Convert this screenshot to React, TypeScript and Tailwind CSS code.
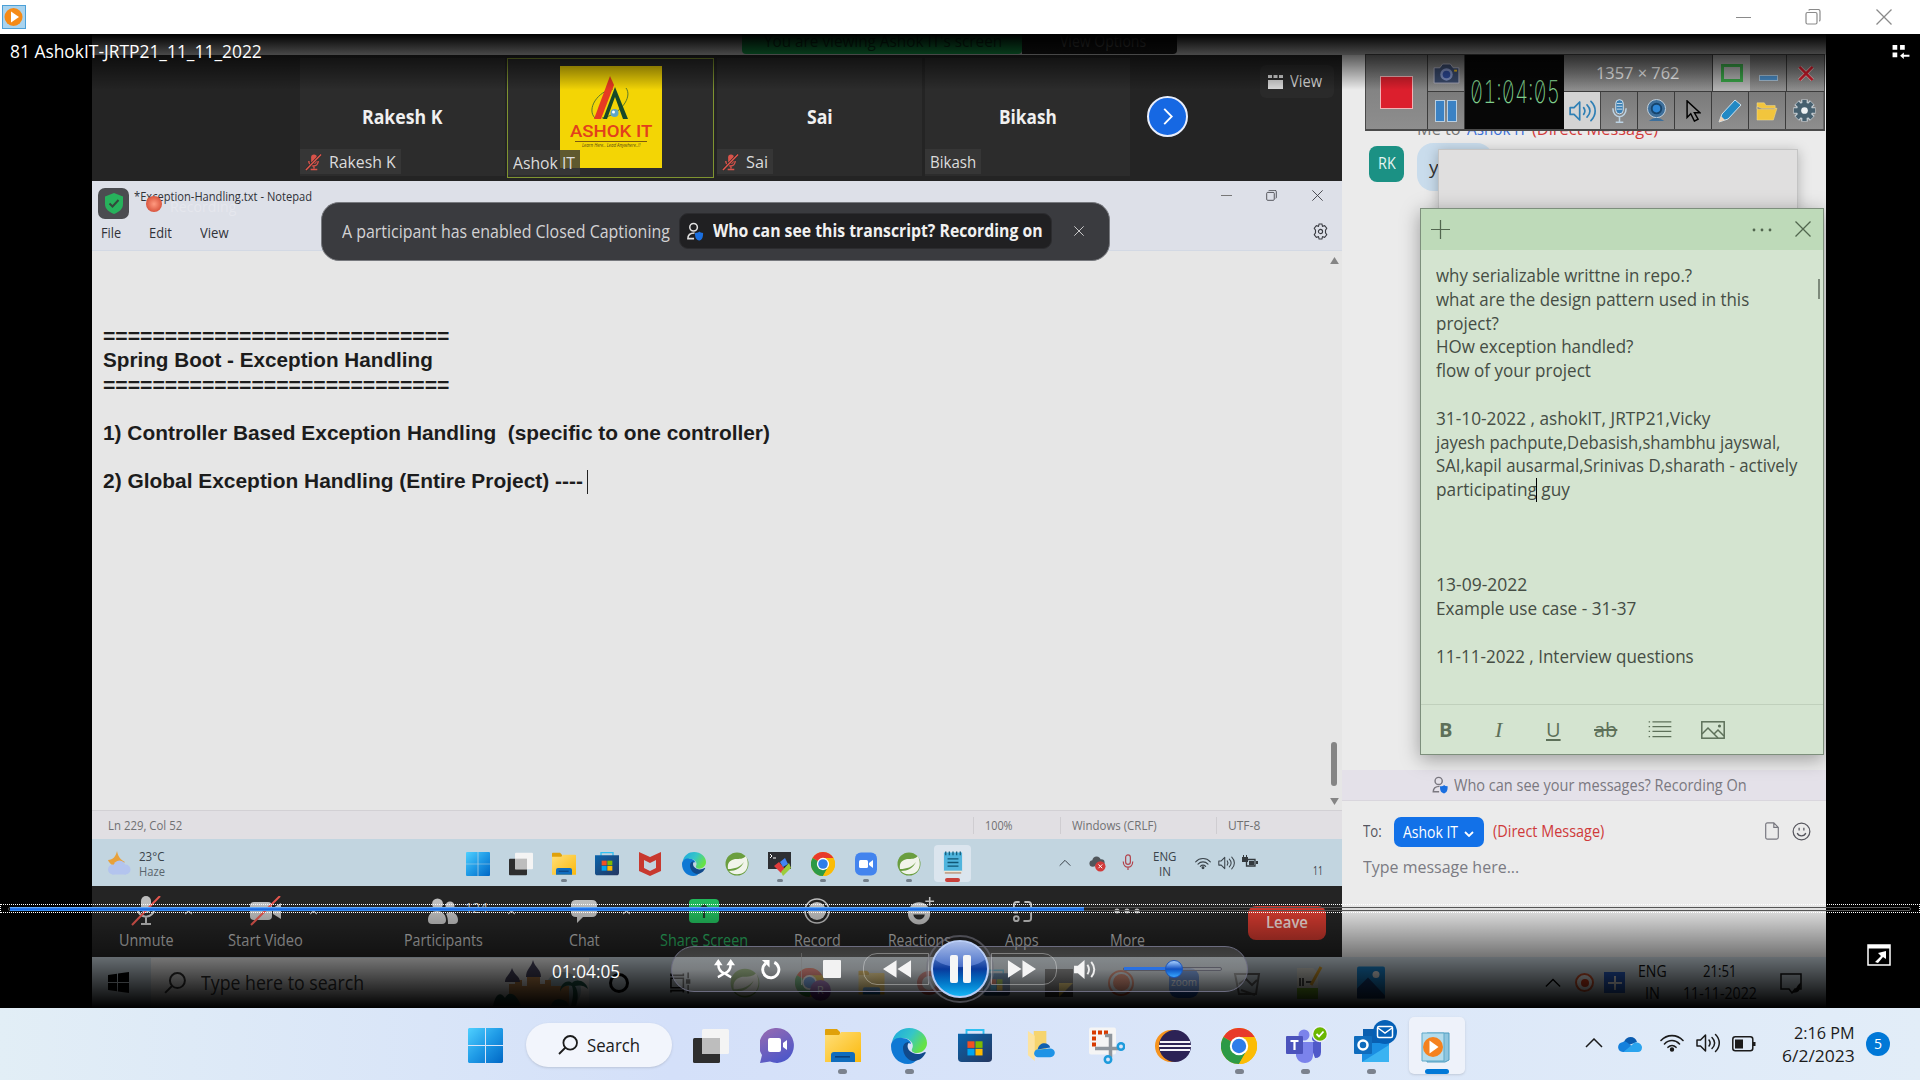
import React, { useLayoutEffect, useRef, ReactNode } from "react";

/* Single-line text stretched to the width of its box. */
function Fit({ c, children }: { c: string; children: ReactNode }) {
  const box = useRef<HTMLSpanElement>(null);
  const txt = useRef<HTMLSpanElement>(null);
  useLayoutEffect(() => {
    if (box.current && txt.current) {
      const s = box.current.clientWidth / txt.current.offsetWidth;
      txt.current.style.transform = "scaleX(" + s + ")";
    }
  }, []);
  return (
    <span ref={box} className={"block shrink-0 overflow-visible whitespace-nowrap " + c}>
      <span ref={txt} className="inline-block origin-left whitespace-pre">{children}</span>
    </span>
  );
}

type P = { c?: string };

const Win11 = ({ c = "" }: P) => (
  <svg viewBox="0 0 35 35" className={"shrink-0 " + c}>
    <defs><linearGradient id="w11" x1="0" y1="0" x2="1" y2="1"><stop offset="0" stopColor="#4fd0ff" /><stop offset="0.5" stopColor="#1f9ae6" /><stop offset="1" stopColor="#0067c5" /></linearGradient></defs>
    <path fill="url(#w11)" d="M1 0h16v17H0V1zM18 0h16l1 1v16H18zM0 18h17v17H1l-1-1zM18 18h17v16l-1 1H18z" />
  </svg>
);
const TaskView = ({ c = "" }: P) => (
  <svg viewBox="0 0 36 36" className={"shrink-0 " + c}>
    <rect x="0" y="10" width="27" height="25" rx="1.5" fill="#2e2e2e" />
    <rect x="9" y="1" width="27" height="25" rx="1.5" fill="#f4f4f4" />
    <path d="M9 10h18v16H9z" fill="#bdbdbd" />
  </svg>
);
const Folder = ({ c = "" }: P) => (
  <svg viewBox="0 0 36 36" className={"shrink-0 " + c}>
    <defs><linearGradient id="fd" x1="0" y1="0" x2="1" y2="1"><stop offset="0" stopColor="#ffdf7a" /><stop offset="1" stopColor="#fbb90c" /></linearGradient></defs>
    <path d="M0 2q0-1 1-1h11l3 3v4H0z" fill="#e0a10a" />
    <path d="M0 7h14l2-3h19l1 1v29H0z" fill="url(#fd)" />
    <path d="M6 34v-7q0-3 3-3h18q3 0 3 3v7z" fill="#0f6cbd" />
    <rect x="10" y="28" width="15" height="1.6" fill="#0a3f7a" />
  </svg>
);
const Store = ({ c = "" }: P) => (
  <svg viewBox="0 0 36 36" className={"shrink-0 " + c}>
    <defs><linearGradient id="st" x1="0" y1="0" x2="1" y2="1"><stop offset="0" stopColor="#0a64ac" /><stop offset="1" stopColor="#24365f" /></linearGradient></defs>
    <path d="M9 7V1h18v6" fill="none" stroke="#2fc0f2" strokeWidth="2" />
    <path d="M0 5h36v26q0 4-4 4H4q-4 0-4-4z" fill="url(#st)" />
    <path d="M10 13h7.5v7H10z" fill="#f25022" /><path d="M18.500 13H26v7h-7.500z" fill="#7fba00" />
    <path d="M10 21h7.500v7H10z" fill="#00a4ef" /><path d="M18.500 21H26v7h-7.500z" fill="#ffb900" />
  </svg>
);
const Edge = ({ c = "" }: P) => (
  <svg viewBox="0 0 36 36" className={"shrink-0 " + c}>
    <defs><linearGradient id="eg" x1="0" y1="0" x2="1" y2="0.500"><stop offset="0" stopColor="#1ca6e0" /><stop offset="0.550" stopColor="#35c6c8" /><stop offset="1" stopColor="#66e246" /></linearGradient></defs>
    <path d="M1 14C3 5 10 0 18 0c10 0 18 7 18 15 0 6-5 10-10 10-4 0-6-2-5-4 3-5-2-11-9-11-5 0-9 2-11 4z" fill="url(#eg)" />
    <path d="M0 18c0-6 6-9 11-8 5 0 9 3 9 6-3-2-6 1-6 5 0 7 6 11 13 10-3 3-6 5-10 5C7 36 0 28 0 18z" fill="#0f78d4" />
    <path d="M12 20c0-4 3-6 6-6-3 4-1 9 4 11 4 2 8 1 12-1 1 0 1 1 0 2-3 5-7 7-12 7-6-1-10-7-10-13z" fill="#114a8b" />
  </svg>
);
const Chrome = ({ c = "" }: P) => (
  <svg viewBox="0 0 36 36" className={"shrink-0 " + c}>
    <circle cx="18" cy="18" r="18" fill="#fbbc05" />
    <path d="M18 18L2.400 9A18 18 0 0 1 33.600 9z" fill="#e8392b" />
    <path d="M18 18L2.400 9A18 18 0 0 0 18 36L26 22z" fill="#2c9a46" />
    <path d="M18 9h15.600A18 18 0 0 1 18 36l8-14z" fill="#fbbc05" />
    <circle cx="18" cy="18" r="9.200" fill="#fff" /><circle cx="18" cy="18" r="7.200" fill="#2f7de9" />
  </svg>
);
const Leaf = ({ c = "" }: P) => (
  <svg viewBox="0 0 24 24" className={"shrink-0 " + c}>
    <circle cx="12" cy="12" r="11.500" fill="#6a9e3f" />
    <path d="M21 4c4 9 1 17-7 18-5 1-8-1-10-3 7 0 12-3 15-9-4 5-9 7-16 7-1-6 2-9 7-10 5 0 8 0 11-3z" fill="#f1f4ea" />
  </svg>
);
const McAfee = ({ c = "" }: P) => (
  <svg viewBox="0 0 22 24" className={"shrink-0 " + c}><path d="M0 0l11 5L22 0v19l-11 5L0 19zM5 8v8l6 3 6-3V8l-6 3z" fill="#c8392f" fillRule="evenodd" /></svg>
);
const Term = ({ c = "" }: P) => (
  <svg viewBox="0 0 24 24" className={"shrink-0 " + c}>
    <rect x="0" y="0" width="23" height="17" fill="#2d2f33" /><path d="M2 2l2 2-2 2M5 6h3" stroke="#fff" fill="none" />
    <path d="M6 14l5-4 6 7-4 4z" fill="#e03c3c" /><path d="M12 10l5-4 3 6-5 3z" fill="#4285f4" /><path d="M13 20l8-9 2 5-8 8z" fill="#9ccc3c" />
  </svg>
);
const ZoomApp = ({ c = "" }: P) => (
  <svg viewBox="0 0 24 24" className={"shrink-0 " + c}><rect x="1" y="0.500" width="22" height="23" rx="6" fill="#4384ee" /><rect x="5" y="8" width="9" height="8" rx="1.500" fill="#fff" /><path d="M15 11l4-3v8l-4-3z" fill="#fff" /></svg>
);
const NotepadApp = ({ c = "" }: P) => (
  <svg viewBox="0 0 22 26" className={"shrink-0 " + c}><rect x="1" y="2" width="20" height="21" fill="#4fb4dd" /><path d="M3 1v4M7 1v4M11 1v4M15 1v4M19 1v4" stroke="#14607f" strokeWidth="1.500" /><path d="M5 9h12M5 13h12M5 17h12" stroke="#0f5574" strokeWidth="1.500" /><path d="M1 22h20v2H1z" fill="#efe6d6" /><path d="M2 24h18v1H2z" fill="#a4653a" /></svg>
);
const Wifi = ({ c = "" }: P) => (
  <svg viewBox="0 0 24 18" className={"shrink-0 " + c} fill="none" stroke="currentColor" strokeWidth="1.600" strokeLinecap="round"><path d="M1 6.500c6-6.500 16-6.500 22 0M4.500 10c4.200-4.600 10.800-4.600 15 0M8 13.300c2.300-2.500 5.700-2.500 8 0" /><circle cx="12" cy="15.500" r="1.400" fill="currentColor" /></svg>
);
const Speaker = ({ c = "" }: P) => (
  <svg viewBox="0 0 24 20" className={"shrink-0 " + c} fill="none" stroke="currentColor" strokeWidth="1.500" strokeLinejoin="round" strokeLinecap="round"><path d="M1 7h3.500L9.500 2v16l-5-5H1zM13 7c1.500 2 1.500 4 0 6M16 4.500c3.500 3.500 3.500 7.500 0 11M19.500 1.500c5 5 5 12 0 17" /></svg>
);
const Battery = ({ c = "" }: P) => (
  <svg viewBox="0 0 24 16" className={"shrink-0 " + c}><rect x="0.800" y="0.800" width="20" height="14" rx="2.500" fill="none" stroke="currentColor" strokeWidth="1.500" /><path d="M3 3.500h8v9H3zM21 6h2.500v4H21z" fill="currentColor" /></svg>
);
const Chevron = ({ c = "" }: P) => (
  <svg viewBox="0 0 18 10" className={"shrink-0 " + c}><path d="M1 9l8-8 8 8" fill="none" stroke="currentColor" strokeWidth="1.500" /></svg>
);
const Cross = ({ c = "" }: P) => (
  <svg viewBox="0 0 16 16" className={"shrink-0 " + c}><path d="M0.500 0.500l15 15M15.500 0.500l-15 15" stroke="currentColor" strokeWidth="1.300" /></svg>
);
const Restore = ({ c = "" }: P) => (
  <svg viewBox="0 0 16 16" className={"shrink-0 " + c} fill="none" stroke="currentColor" strokeWidth="1.200"><rect x="1" y="3.500" width="11" height="11.500" rx="1.500" /><path d="M4 1.500q0-1 1-1h8q2 0 2 2V11q0 1-1 1" /></svg>
);
const Magnifier = ({ c = "" }: P) => (
  <svg viewBox="0 0 20 20" className={"shrink-0 " + c} fill="none" stroke="currentColor" strokeWidth="1.800"><circle cx="12.200" cy="7.800" r="6.800" /><path d="M7.500 12.500L1 19" /></svg>
);
const MicOff = ({ c = "" }: P) => (
  <svg viewBox="0 0 18 18" className={"shrink-0 " + c}><rect x="6.500" y="1" width="6" height="10" rx="3" fill="#d9534a" /><path d="M4 8c0 7 10 7 10 0M9.500 13v3M6 17h7" stroke="#d9534a" strokeWidth="1.500" fill="none" /><path d="M1 17.500L17 1" stroke="#2b2b2b" strokeWidth="3" /><path d="M1 17.500L17 1" stroke="#e0574d" strokeWidth="1.600" /></svg>
);
const PersonShield = ({ c = "" }: P) => (
  <svg viewBox="0 0 18 20" className={"shrink-0 " + c} fill="none" stroke="currentColor" strokeWidth="1.600"><circle cx="7.500" cy="5.500" r="4" /><path d="M8 17.500H1.500c0-5 3-6 7-6" /><path d="M9 11.500q4 0 4.500-1.500 1 1.500 4 1.500c0 5-1 7-4 8-3.500-1-4.500-3-4.500-8z" fill="#1a6fe0" stroke="none" /></svg>
);
const Smile = ({ c = "" }: P) => (
  <svg viewBox="0 0 20 20" className={"shrink-0 " + c} fill="none" stroke="currentColor" strokeWidth="1.300"><circle cx="10" cy="10" r="8.800" /><path d="M5.500 11.500c1.500 4 7.500 4 9 0M7.500 6v3M12.500 6v3" /></svg>
);
const Gear = ({ c = "" }: P) => (
  <svg viewBox="0 0 24 24" className={"shrink-0 " + c}>
    <g stroke="#c5ced4" strokeWidth="7"><path d="M12 0.500v23M0.500 12h23M3.900 3.900l16.200 16.200M20.100 3.900L3.900 20.100" /></g>
    <circle cx="12" cy="12" r="9" fill="#c5ced4" />
    <g stroke="currentColor" strokeWidth="4.500"><path d="M12 1v22M1 12h22M4.200 4.200l15.600 15.600M19.800 4.200L4.200 19.800" /></g>
    <circle cx="12" cy="12" r="8" fill="currentColor" /><circle cx="12" cy="12" r="3.500" fill="#eef2f4" />
  </svg>
);
const Cloud = ({ c = "" }: P) => (
  <svg viewBox="0 0 24 16" className={"shrink-0 " + c}><path d="M6 6C8 0 17-1 19 6l-8 3z" fill="#0a5cb0" /><path d="M5 16c-6 0-7-9 0-10 2-1 4 0 6 2l8 6-2 2z" fill="#1480dc" /><path d="M6 15.500l9-7.500c2-3 9-1 9 3.500 0 3-2 4.500-4 4.500H6z" fill="#2ba4ee" /></svg>
);
const Wmp = ({ c = "" }: P) => (
  <svg viewBox="0 0 24 24" className={"shrink-0 " + c}><rect x="0.500" y="0.500" width="23" height="23" fill="#a9d3ee" stroke="#4ba0d8" /><circle cx="11.500" cy="12" r="9" fill="#f58a16" /><path d="M9 6.500v11l8-5.500z" fill="#fff" /></svg>
);

const Logo = () => (
  <div className="flex h-[102px] w-[102px] flex-col items-center bg-[#f3d505]">
    <svg viewBox="0 0 50 46" className="mt-[9px] h-[46px] w-[50px]">
      <path d="M9 43C0 34 12 16 27 14M40 13C47 22 34 40 16 43" fill="none" stroke="#5b7a2a" strokeWidth="1" />
      <path d="M8 44L24 1l4 9-13 34z" fill="#e63a22" /><path d="M17 44L29 12l13 32h-5L29 22l-8 22z" fill="#17492a" />
      <circle cx="28.500" cy="38" r="4" fill="#5fa5c9" /><circle cx="27.500" cy="37" r="1.500" fill="#fff" />
    </svg>
    <Fit c="mt-[2px] w-[82px] font-['Roboto'] text-[17px] leading-[17px] font-medium text-[#e2401c]">ASHOK IT</Fit>
    <div className="mt-px h-px w-[72px] bg-[#7d5a10]" />
    <Fit c="mt-px w-[58px] text-[5px] leading-[5px] italic text-[#5b4a10]">Learn Here.. Lead Anywhere..!!</Fit>
  </div>
);

const Tile = ({ name, w, label, lw, muted, box, center }: { name: string; w: string; label: string; lw: string; muted?: boolean; box: string; center: ReactNode }) => (
  <div className={"flex h-[118px] shrink-0 flex-col bg-[#2c2c2c] " + box}>
    <div className="flex h-[91px] items-center justify-center">{center ?? <Fit c={"pt-[27px] text-[19px] leading-[19px] font-bold text-[#f0f0f0] " + w}>{name}</Fit>}</div>
    <div className="flex h-[25px] items-center">
      <div className="z-10 flex h-[25px] items-center gap-[7px] bg-[#3a3a3a]/80 px-[5px] text-[#dcdcdc]">
        {muted && <MicOff c="h-[20px] w-[17px]" />}
        <Fit c={"text-[17px] leading-[17px] " + lw}>{label}</Fit>
      </div>
    </div>
  </div>
);

const Tool = ({ box, w, label, icon, green }: { box: string; w: string; label: string; icon: ReactNode; green?: boolean }) => (
  <div className={"flex shrink-0 flex-col items-center " + box}>
    <div className="mt-[10px] flex h-[30px] items-center justify-center">{icon}</div>
    <Fit c={"mt-[4px] text-[17px] leading-[20px] " + w + (green ? " text-[#2bb563]" : " text-[#c2c2c2]")}>{label}</Fit>
  </div>
);

const Caret = ({ c }: { c: string }) => (<svg viewBox="0 0 10 6" className={"absolute top-[24px] h-[5px] w-[9px] " + c}><path d="M1 5l4-4 4 4" fill="none" stroke="#aaa" strokeWidth="1.500" /></svg>);

const Dot = ({ on }: { on?: boolean }) => <div className={"mt-[3px] h-[3px] w-[6px] rounded-full " + (on ? "bg-[#74808a]" : "")} />;

const innerApps: [(p: P) => ReactNode, boolean][] = [
  [Win11, false], [TaskView, false], [Folder, true], [Store, false], [McAfee, false], [Edge, false],
  [Leaf, false], [Term, true], [Chrome, true], [ZoomApp, true], [Leaf, true],
];

function Notepad() {
  return (
    <div className="relative flex h-[705px] flex-col bg-[#e6e6e6]">
      <div className="flex h-[70px] shrink-0 justify-between border-b border-[#d3d9e4] bg-[#dde0e8]">
        <div className="flex flex-col text-[#303238]">
          <div className="flex h-[38px] items-start pl-[6px] pt-[7px]">
            <div className="flex h-[31px] w-[31px] items-center justify-center rounded-[7px] bg-[#4b4c50]">
              <svg viewBox="0 0 18 21" className="h-[21px] w-[18px]"><path d="M9 0l9 3.500V11c0 5-4 8-9 10-5-2-9-5-9-10V3.500z" fill="#27b25c" /><path d="M4.500 10.500l3 3 6-6.500" stroke="#33483b" strokeWidth="2" fill="none" /></svg>
            </div>
            <div className="relative ml-[5px]">
              <Fit c="w-[178px] text-[12.500px] leading-[18px]">*Exception-Handling.txt - Notepad</Fit>
              <div className="absolute left-[12px] top-[8px] h-[16px] w-[16px] rounded-full bg-radial from-[#ff9a80] to-[#c8331f]" />
              <Fit c="absolute left-[36px] top-[8px] w-[66px] text-[15px] leading-[20px] text-white/25">Recording</Fit>
            </div>
          </div>
          <div className="flex pt-[4px] text-[14px] leading-[20px]">
            <Fit c="ml-[9px] w-[20px]">File</Fit><Fit c="ml-[28px] w-[23px]">Edit</Fit><Fit c="ml-[28px] w-[29px]">View</Fit>
          </div>
        </div>
        <div className="flex w-[134px] flex-col text-[#3a3c42]">
          <div className="flex h-[28px] items-center"><div className="ml-[13px] h-px w-[11px] bg-[#777]" /><Restore c="ml-[34px] h-[11px] w-[11px]" /><Cross c="ml-[35px] h-[11px] w-[11px]" /></div>
          <svg viewBox="0 0 18 18" className="ml-[104px] mt-[14px] h-[17px] w-[17px]" fill="none" stroke="currentColor" strokeWidth="1.200"><path d="M7.500 1h3l.6 2.500 2.300-.7L15.600 5.500l-1.300 2v3l1.300 2-2.200 2.700-2.300-.7-.6 2.500h-3l-.6-2.500-2.300.7-2.200-2.700 1.300-2v-3l-1.300-2 2.200-2.700 2.300.7z" /><circle cx="9" cy="9" r="2.200" /></svg>
        </div>
      </div>
      <div className="flex h-[559px] shrink-0 justify-between">
        <div className="relative flex flex-col pl-[11px] pt-[73px] font-['Liberation_Sans'] text-[21px] leading-[24.350px] font-bold text-[#1c1c1c]">
          <Fit c="w-[346px]">============================</Fit>
          <Fit c="w-[330px]">Spring Boot - Exception Handling</Fit>
          <Fit c="w-[346px]">============================</Fit>
          <Fit c="mt-[24px] w-[667px]">1) Controller Based Exception Handling  (specific to one controller)</Fit>
          <div className="mt-[24px] flex items-center"><Fit c="w-[480px]">2) Global Exception Handling (Entire Project) ----</Fit><div className="ml-[4px] h-[24px] w-px bg-[#222]" /></div>
        </div>
        <div className="flex w-[16px] flex-col items-center pt-[6px]">
          <svg viewBox="0 0 10 8" className="h-[7px] w-[9px]"><path d="M0 8l5-8 5 8z" fill="#858585" /></svg>
          <div className="mt-[478px] h-[44px] w-[6px] rounded-full bg-[#858585]" />
          <svg viewBox="0 0 10 8" className="mt-[12px] h-[7px] w-[9px]"><path d="M0 0l5 8 5-8z" fill="#858585" /></svg>
        </div>
      </div>
      <div className="flex h-[29px] shrink-0 items-center border-t border-[#d2d0d4] bg-[#e1dfe3] text-[12px] leading-[18px] text-[#707072]">
        <Fit c="ml-[16px] w-[74px] pt-[2px]">Ln 229, Col 52</Fit>
        <div className="ml-[791px] h-[17px] w-px bg-[#cfcdd1]" /><Fit c="ml-[11px] w-[28px] pt-[2px]">100%</Fit>
        <div className="ml-[47px] h-[17px] w-px bg-[#cfcdd1]" /><Fit c="ml-[11px] w-[85px] pt-[2px]">Windows (CRLF)</Fit>
        <div className="ml-[59px] h-[17px] w-px bg-[#cfcdd1]" /><Fit c="ml-[11px] w-[32px] pt-[2px]">UTF-8</Fit>
      </div>
      <div className="flex h-[47px] shrink-0 bg-[#c2d5e0] text-[#3a434a]">
        <svg viewBox="0 0 24 24" className="ml-[15px] mt-[12px] h-[24px] w-[24px]"><path d="M10 0c1 6 4 9 8 11l-6 5C6 16 2 12 1 9c5 0 8-4 9-9z" fill="#e8a13a" /><g fill="#b3c4ee"><circle cx="6" cy="18.500" r="5" /><circle cx="12.500" cy="15.500" r="6" /><circle cx="18.500" cy="18.500" r="5" /><rect x="5" y="16" width="14" height="7.500" /></g></svg>
        <div className="ml-[8px] flex flex-col pt-[10px] text-[12px] leading-[15px]"><Fit c="w-[25px]">23°C</Fit><Fit c="w-[26px] text-[#5a656d]">Haze</Fit></div>
        <div className="ml-[291px] flex">
          {innerApps.map(([Icon, on], i) => (
            <div key={i} className="flex w-[43.200px] flex-col items-center pt-[13px]"><Icon c="h-[24px] w-[24px]" /><Dot on={on} /></div>
          ))}
          <div className="ml-[3px] mt-[6px] flex h-[37px] w-[37px] flex-col items-center rounded-[4px] bg-[#dbe5ee] pt-[5px]"><NotepadApp c="h-[25px] w-[20px]" /><div className="mt-[3px] h-[4px] w-[15px] rounded-full bg-[#c9403a]" /></div>
        </div>
        <div className="ml-[88px] flex items-start">
          <Chevron c="mt-[20px] h-[8px] w-[12px]" />
          <svg viewBox="0 0 18 18" className="ml-[18px] mt-[16px] h-[17px] w-[17px]"><g fill="#50565b"><circle cx="4" cy="9" r="3.500" /><circle cx="8" cy="6" r="4.500" /><circle cx="13" cy="8" r="3.500" /></g><circle cx="12" cy="12" r="5.500" fill="#d13b3b" /><path d="M10 10l4 4M14 10l-4 4" stroke="#fff" /></svg>
          <svg viewBox="0 0 12 18" className="ml-[16px] mt-[15px] h-[17px] w-[12px]" fill="none" stroke="#b2454e" strokeWidth="1.300"><rect x="3.500" y="1" width="5" height="10" rx="2.500" /><path d="M1 8c0 8 10 8 10 0M6 14v3" /></svg>
          <div className="ml-[19px] flex flex-col items-center pt-[10px] text-[12.500px] leading-[15px]"><Fit c="w-[23px]">ENG</Fit><Fit c="w-[12px]">IN</Fit></div>
          <Wifi c="ml-[19px] mt-[18px] h-[13px] w-[16px]" />
          <Speaker c="ml-[7px] mt-[17px] h-[14px] w-[17px]" />
          <svg viewBox="0 0 16 14" className="ml-[7px] mt-[16px] h-[14px] w-[16px]"><path d="M5 4.500h8v6.500H4.500V7" fill="none" stroke="#33393d" strokeWidth="1.300" /><path d="M7 6h5v4H7zM14 6h2v3h-2z" fill="#33393d" /><path d="M0 2h6v5H0zM1 0h1v2H1zM4 0h1v2H4z" fill="#33393d" /></svg>
          <Fit c="ml-[55px] mt-[24px] w-[10px] text-[12px] leading-[16px]">11</Fit>
        </div>
      </div>
      <div className="absolute left-[229px] top-[21px] flex h-[59px] w-[789px] items-center rounded-[18px] border border-[#77797e] bg-[#3a3b3f]">
        <Fit c="-mt-[2px] ml-[20px] w-[328px] text-[17.500px] leading-[24px] text-[#d2d2d4]">A participant has enabled Closed Captioning</Fit>
        <div className="-mt-px ml-[9px] flex h-[36px] w-[373px] items-center rounded-[9px] border border-[#2c2c2f] bg-[#202022] text-[#e2e2e2]">
          <PersonShield c="ml-[6px] h-[19px] w-[18px]" />
          <Fit c="-mt-[2px] ml-[9px] w-[330px] text-[17.500px] leading-[24px] font-bold text-[#f1f1f1]">Who can see this transcript? Recording on</Fit>
        </div>
        <Cross c="-mt-[2px] ml-[22px] h-[10px] w-[10px] text-[#e8e8e8]" />
      </div>
    </div>
  );
}

function ZoomBar() {
  return (
    <div className="relative flex h-[71px] bg-[#242424]">
      <Tool box="w-[108px]" w="w-[55px]" label="Unmute" icon={<svg viewBox="0 0 30 30" className="h-[30px] w-[30px]"><rect x="10" y="0" width="10" height="17" rx="5" fill="#bdbdbd" /><path d="M6.500 11c0 13 17 13 17 0M15 21v6M10 28h10" stroke="#bdbdbd" strokeWidth="2" fill="none" /><path d="M1 29L29 0" stroke="#e4574f" strokeWidth="2" /></svg>} />
      <Tool box="w-[130px]" w="w-[75px]" label="Start Video" icon={<svg viewBox="0 0 32 30" className="h-[30px] w-[32px]"><rect x="1" y="6" width="22" height="18" rx="4" fill="#bdbdbd" /><path d="M24 12l8-5v16l-8-5z" fill="#bdbdbd" /><path d="M2 29L31 0" stroke="#e4574f" strokeWidth="2" /></svg>} />
      <Tool box="ml-[48px] w-[130px]" w="w-[79px]" label="Participants" icon={<svg viewBox="0 0 30 26" className="h-[26px] w-[30px]" fill="#bdbdbd"><circle cx="9.500" cy="6" r="5.500" /><circle cx="22" cy="8" r="4.500" /><path d="M0 22c0-12 18-12 18 0q0 4-4 4H4q-4 0-4-4zM20 26q0-7-2-10c5-4 12-1 12 6q0 4-4 4z" /></svg>} />
      <Tool box="ml-[26px] w-[100px]" w="w-[31px]" label="Chat" icon={<svg viewBox="0 0 26 26" className="h-[26px] w-[26px]"><path d="M5 2h16q5 0 5 5v7q0 5-5 5H12l-6 6v-6H5q-5 0-5-5V7q0-5 5-5z" fill="#bdbdbd" /></svg>} />
      <Tool green box="ml-[20px] w-[100px]" w="w-[88px]" label="Share Screen" icon={<svg viewBox="0 0 30 24" className="h-[24px] w-[30px]"><rect width="30" height="24" rx="4" fill="#21b85a" /><path d="M15 19V6M10 11l5-5 5 5" stroke="#1c3d29" strokeWidth="2.200" fill="none" /></svg>} />
      <Tool box="ml-[13px] w-[100px]" w="w-[47px]" label="Record" icon={<svg viewBox="0 0 26 26" className="h-[26px] w-[26px]"><circle cx="13" cy="13" r="12" stroke="#bdbdbd" strokeWidth="1.600" fill="none" /><circle cx="13" cy="13" r="9" fill="#bdbdbd" /></svg>} />
      <Tool box="w-[104px]" w="w-[63px]" label="Reactions" icon={<svg viewBox="0 0 28 30" className="ml-[4px] h-[29px] w-[28px]"><circle cx="12" cy="17" r="11.500" fill="#bdbdbd" /><path d="M6 18c1 7 11 7 12 0z" fill="#2a2a2a" /><circle cx="8" cy="13" r="1.500" fill="#2a2a2a" /><circle cx="16" cy="13" r="1.500" fill="#2a2a2a" /><path d="M23 0v9M18.500 4.500h9" stroke="#bdbdbd" strokeWidth="1.600" /></svg>} />
      <Tool box="w-[102px]" w="w-[34px]" label="Apps" icon={<svg viewBox="0 0 22 24" className="h-[23px] w-[21px]" fill="none" stroke="#bdbdbd" strokeWidth="2"><path d="M2 9V5q0-3 3-3h3M13 2h4q3 0 3 3v4M20 13v6q0 3-3 3h-5M2 13h4" /><circle cx="4.500" cy="19.500" r="2.500" /></svg>} />
      <Tool box="ml-px w-[106px]" w="w-[35px]" label="More" icon={<svg viewBox="0 0 26 6" className="h-[6px] w-[26px]" fill="#bdbdbd"><circle cx="3" cy="3" r="2.500" /><circle cx="13" cy="3" r="2.500" /><circle cx="23" cy="3" r="2.500" /></svg>} />
      <div className="ml-[68px] mt-[20px] flex h-[34px] w-[78px] items-center justify-center rounded-[8px] bg-[#d23a2f]"><Fit c="-mt-[2px] w-[42px] text-[16px] leading-[20px] font-semibold text-[#f2dddb]">Leave</Fit></div>
      <Fit c="absolute left-[373px] top-[11px] w-[23px] text-[15px] leading-[20px] text-[#bdbdbd]">124</Fit>
      <Caret c="left-[92px]" /><Caret c="left-[217px]" /><Caret c="left-[415px]" /><Caret c="left-[530px]" />
    </div>
  );
}

function HostTaskbar() {
  return (
    <div className="flex h-[51px] items-center bg-[#cfdde6] text-[#111]">
      <svg viewBox="0 0 21 21" className="ml-[16px] h-[21px] w-[21px]" fill="#000"><path d="M0 3l9-1.300V10H0zM10 1.500L21 0v10H10zM0 11h9v8.300L0 18zM10 11h11v10L10 19.500z" /></svg>
      <div className="ml-[22px] flex h-[50px] w-[438px] items-center bg-[#f1f1f1] text-[#333]">
        <Magnifier c="ml-[13px] h-[22px] w-[22px]" />
        <Fit c="ml-[15px] w-[163px] text-[20px] leading-[28px]">Type here to search</Fit>
        <svg viewBox="0 0 96 46" className="ml-[129px] h-[46px] w-[96px]"><circle cx="70" cy="30" r="18" fill="#a9c4cf" /><path d="M16 46V24h6v-4h7v6h5V15h13v9h5v-4h6v6h18v20z" fill="#c58a4e" /><path d="M12 22c0-6 5-7 7-14 2 7 8 8 8 14zM33 17c0-8 5-9 7-17 2 8 8 9 8 17z" fill="#4b4763" /><path d="M0 46c3-14 8-14 12-8 4-8 12-4 16 8zM58 46c2-8 10-8 16-4l2 4z" fill="#1f5a4a" /><path d="M78 46c2-8 3-14 1-20-8-2-11 3-12 6 0-8 7-13 12-9 5-5 14-2 16 6-4-4-9-4-13-3 4 6 3 14 1 20z" fill="#1f5a4a" /></svg>
      </div>
      <div className="ml-[20px] h-[20px] w-[20px] rounded-full border-[3px] border-black" />
      <svg viewBox="0 0 22 22" className="ml-[41px] h-[22px] w-[21px]" fill="none" stroke="#111" strokeWidth="1.600"><path d="M1 6h13v10H1zM1 1v2h13V1M1 21v-2h13v2M19 0v6M19 13v9" /><path d="M17.500 8h3v3h-3z" fill="#111" /></svg>
      <Leaf c="ml-[39px] h-[30px] w-[30px]" />
      <div className="relative ml-[35px]"><Chrome c="h-[29px] w-[29px]" /><div className="absolute left-[15px] top-[12px] flex h-[21px] w-[21px] items-center justify-center rounded-full bg-[#7b2fa8] text-[11px] text-white">R</div></div>
      <Folder c="ml-[34px] h-[26px] w-[27px]" />
      <div className="ml-[32px] h-[24px] w-[24px] rounded-full border-[5px] border-[#c94b43]" />
      <Store c="ml-[42px] h-[28px] w-[27px]" />
      <div className="ml-[35px] flex h-[28px] w-[28px] items-end justify-end bg-[#3a3a3a]"><svg viewBox="0 0 12 12" className="h-[14px] w-[14px]"><path d="M0 12V0h12z" fill="#f2c230" /></svg></div>
      <div className="ml-[35px] flex h-[26px] w-[26px] items-center justify-center rounded-full border-2 border-[#e0572c]"><div className="h-[17px] w-[17px] rounded-full bg-[#e0572c]" /></div>
      <div className="ml-[35px] flex h-[30px] w-[30px] items-center justify-center rounded-[9px] bg-[#1f66e0] text-[10px] text-white">zoom</div>
      <svg viewBox="0 0 28 26" className="ml-[34px] h-[26px] w-[28px]" fill="none" stroke="#666" strokeWidth="2"><path d="M2 4h24l-3 20H6zM6 14l7-5 6 6 5-5M8 20l14 5" /></svg>
      <svg viewBox="0 0 28 34" className="ml-[34px] h-[34px] w-[28px]"><path d="M2 2h16l5 5v26H2z" fill="#e9e9e0" /><path d="M2 22h21v11H2z" fill="#79b928" /><path d="M5 12v8M8 12v8M11 16h6" stroke="#222" strokeWidth="1.500" /><path d="M26 1L16 19" stroke="#e8a92c" strokeWidth="3" /></svg>
      <svg viewBox="0 0 28 32" className="ml-[34px] h-[33px] w-[28px]"><rect width="28" height="32" rx="2" fill="#1a8fe0" /><path d="M0 22l11-11 17 18v3H0z" fill="#16407c" /><circle cx="19" cy="8" r="3.500" fill="#fff" /></svg>
      <Chevron c="ml-[160px] h-[10px] w-[16px] text-black" />
      <div className="ml-[14px] flex h-[19px] w-[19px] items-center justify-center rounded-full border-2 border-[#e05a30] bg-white"><div className="h-[8px] w-[8px] rounded-full bg-[#e0401c]" /></div>
      <div className="ml-[10px] flex h-[21px] w-[21px] items-center justify-center bg-[#2a63d0]"><svg viewBox="0 0 14 14" className="h-[14px] w-[14px]"><path d="M7 0v14M0 7h14" stroke="#fff" strokeWidth="2" /></svg></div>
      <div className="-mt-px ml-[13px] flex flex-col items-center text-[15.500px] leading-[22px]"><Fit c="w-[29px]">ENG</Fit><Fit c="w-[15px]">IN</Fit></div>
      <div className="-mt-px ml-[16px] flex flex-col items-center text-[15.500px] leading-[22px]"><Fit c="w-[34px]">21:51</Fit><Fit c="w-[74px]">11-11-2022</Fit></div>
      <svg viewBox="0 0 22 22" className="ml-[23px] h-[22px] w-[22px]" fill="none" stroke="#111" strokeWidth="1.500"><path d="M1 2h20v15h-6l-3 4-3-4H1z" /><path d="M20 12c0 5-2 8-6 8 3-2 3-6 6-8z" fill="#111" /></svg>
    </div>
  );
}

const note: [string, string][] = [
  ["w-[256px]", "why serializable writtne in repo.?"],
  ["w-[313px]", "what are the design pattern used in this"],
  ["w-[63px]", "project?"],
  ["w-[197px]", "HOw exception handled?"],
  ["w-[155px]", "flow of your project"],
  ["", ""],
  ["w-[274px]", "31-10-2022 , ashokIT, JRTP21,Vicky"],
  ["w-[344px]", "jayesh pachpute,Debasish,shambhu jayswal,"],
  ["w-[361px]", "SAI,kapil ausarmal,Srinivas D,sharath - actively"],
  ["w-[134px]", "participating guy"],
  ["", ""], ["", ""], ["", ""],
  ["w-[91px]", "13-09-2022"],
  ["w-[200px]", "Example use case - 31-37"],
  ["", ""],
  ["w-[258px]", "11-11-2022 , Interview questions"],
];

function Sticky() {
  return (
    <div className="absolute left-[78px] top-[153px] flex h-[547px] w-[404px] flex-col border border-[#7d8f7c] bg-[#d4e4d0] text-[#5d7059] shadow-[0_4px_18px_rgba(0,0,0,0.35)]">
      <div className="flex h-[41px] shrink-0 items-center bg-[#bedab9]">
        <svg viewBox="0 0 20 20" className="-mt-px ml-[10px] h-[19px] w-[19px]"><path d="M10 0v20M0 10h20" stroke="#52664f" strokeWidth="1.300" /></svg>
        <svg viewBox="0 0 20 4" className="ml-[302px] h-[4px] w-[20px]" fill="#52664f"><circle cx="2" cy="2" r="1.400" /><circle cx="10" cy="2" r="1.400" /><circle cx="18" cy="2" r="1.400" /></svg>
        <Cross c="ml-[23px] -mt-px h-[16px] w-[16px] text-[#52664f]" />
      </div>
      <div className="relative flex h-[454px] shrink-0 flex-col pl-[15px] pt-[14px] text-[17.500px] text-[#454d44]">
        {note.map(([w, t], i) => (
          <div key={i} className="h-[23.800px] shrink-0 leading-[23.800px]">{t && <Fit c={w}>{t}</Fit>}</div>
        ))}
        <div className="absolute left-[115px] top-[228px] h-[24px] w-px bg-black" />
        <div className="absolute right-[3px] top-[29px] h-[20px] w-[2px] bg-[#7d8a7b]" />
      </div>
      <div className="flex grow items-center border-t border-[#c0d0bc] text-[20px] leading-none">
        <span className="ml-[18px] w-[13px] font-bold">B</span>
        <span className="ml-[43px] w-[10px] font-['Liberation_Serif'] text-[22px] italic">I</span>
        <span className="ml-[41px] w-[14px] underline underline-offset-2">U</span>
        <span className="ml-[34px] w-[26px] line-through">ab</span>
        <svg viewBox="0 0 24 18" className="ml-[28px] h-[17px] w-[24px]" stroke="currentColor" strokeWidth="1.400"><path d="M4 1h20M4 6h20M4 11h20M4 16.500h20" /><path d="M0 1h1.500M0 6h1.500M0 11h1.500M0 16.500h1.500" /></svg>
        <svg viewBox="0 0 24 18" className="ml-[29px] h-[18px] w-[24px]" fill="none" stroke="currentColor" strokeWidth="1.500"><rect x="0.800" y="0.800" width="22.400" height="16.400" /><path d="M1 13l6-6 10 10M13 13l4-4 6 6" /><circle cx="18.500" cy="5" r="0.800" /></svg>
      </div>
    </div>
  );
}

const cell = "flex items-center justify-center border-r border-[#3c3c3c] bg-linear-to-b from-[#7a7a7a] to-[#8e8e8e]";

function Recorder() {
  return (
    <div className="absolute left-[23px] top-[-1px] flex h-[77px] w-[460px] border border-b-2 border-[#4a4a4a] bg-[#666]">
      <div className={cell + " w-[62px]"}><div className="h-[31px] w-[31px] bg-[#dc1f2d] ring-1 ring-[#f2b3b6]" /></div>
      <div className="flex w-[37px] flex-col">
        <div className={cell + " h-[37px] border-b"}><svg viewBox="0 0 28 22" className="h-[21px] w-[27px]"><path d="M1 5h6l3-4h8l3 4h6v16H1z" fill="#39496b" stroke="#aab" /><circle cx="14" cy="12" r="6.500" fill="#7f8fc0" /><circle cx="14" cy="12" r="4" fill="#2e4a9a" /><path d="M22 7h3v2h-3z" fill="#e0b020" /></svg></div>
        <div className={cell + " grow gap-[4px]"}><div className="h-[20px] w-[8px] bg-[#3b82c4] ring-1 ring-[#b9cfe2]" /><div className="h-[20px] w-[8px] bg-[#3b82c4] ring-1 ring-[#b9cfe2]" /></div>
      </div>
      <div className="flex w-[99px] items-center justify-center bg-[#070707]"><Fit c="w-[90px] font-['Inter'] text-[31px] leading-[34px] font-extralight text-[#7fce8c] [font-feature-settings:'zero','tnum']">01:04:05</Fit></div>
      <div className="flex grow flex-col">
        <div className="flex h-[37px] border-b border-[#3c3c3c]">
          <div className={cell + " w-[149px]"}><Fit c="w-[84px] text-[16px] leading-[20px] text-white">1357 × 762</Fit></div>
          <div className="flex w-[37px] items-center justify-center bg-[#b3b3b3]"><div className="h-[18px] w-[22px] border-[3px] border-[#3aa648]" /></div>
          <div className={cell + " w-[37px]"}><div className="mt-[9px] h-[4px] w-[17px] bg-[#4a8dc7] ring-1 ring-[#a5bfd5]" /></div>
          <div className={cell + " w-[37px] border-r-0"}><svg viewBox="0 0 16 16" className="h-[15px] w-[16px]"><path d="M1 1l14 14M15 1L1 15" stroke="#e0bcbc" strokeWidth="4" /><path d="M1 1l14 14M15 1L1 15" stroke="#d21a2a" strokeWidth="2.600" /></svg></div>
        </div>
        <div className="flex grow">
          <div className="flex w-[37px] items-center justify-center border-r border-[#444] bg-[#d4d4d4]"><Speaker c="h-[24px] w-[27px] text-[#2e7fb5]" /></div>
          <div className={cell + " w-[37px]"}><svg viewBox="0 0 18 26" className="h-[26px] w-[17px]"><rect x="5" y="1" width="8" height="15" rx="4" fill="#3a7fb4" stroke="#d5e3ee" /><path d="M6 5h6M6 8h6M6 11h6" stroke="#d5e3ee" /><path d="M2 10c0 12 14 12 14 0M9 19v5M5 25h8" stroke="#bcd3e4" strokeWidth="1.600" fill="none" /></svg></div>
          <div className={cell + " w-[37px]"}><svg viewBox="0 0 22 24" className="h-[23px] w-[21px]"><circle cx="11" cy="10" r="9.500" fill="#3d6f9b" stroke="#c3d2de" /><circle cx="11" cy="10" r="5" fill="#2d86d6" stroke="#17446c" strokeWidth="2" /><path d="M3 23q8-7 16 0z" fill="#3d6f9b" /></svg></div>
          <div className={cell + " w-[37px]"}><svg viewBox="0 0 16 24" className="h-[22px] w-[15px]"><path d="M1 1v18l4-4 4 8 4-2-4-7h6z" fill="#8a8a8a" stroke="#000" strokeWidth="1.600" /></svg></div>
          <div className={cell + " w-[37px]"}><svg viewBox="0 0 24 24" className="h-[24px] w-[24px]"><path d="M1 23l3-8L17 1l6 5L10 20z" fill="#2389c4" stroke="#cfe3ef" /><path d="M1 23l2-6 4 4z" fill="#f1d3b7" /></svg></div>
          <div className={cell + " w-[37px]"}><svg viewBox="0 0 24 22" className="h-[20px] w-[24px]"><path d="M1 2h8l2 3h10v4H1zM1 6v15h18l4-13H6z" fill="#f2c53d" stroke="#f7e2a0" strokeWidth="0.500" /></svg></div>
          <div className={cell + " w-[37px] border-r-0"}><Gear c="h-[23px] w-[23px] text-[#46606f]" /></div>
        </div>
      </div>
    </div>
  );
}

function ChatPanel() {
  return (
    <div className="relative flex h-[902px] w-[484px] flex-col bg-[#ebebeb]">
      <div className="flex h-[715px] flex-col">
        <div className="flex pl-[75px] pt-[63px] text-[17px] leading-[22px] text-[#777]"><Fit c="w-[44px]">Me to</Fit><Fit c="ml-[6px] w-[60px] text-[#3a70d8]">Ashok IT</Fit><Fit c="ml-[5px] w-[126px] text-[#d23c3c]">(Direct Message)</Fit></div>
        <div className="flex items-start pt-[3px]">
          <div className="ml-[27px] mt-[3px] flex h-[36px] w-[35px] items-center justify-center rounded-[8px] bg-[#1b9184] text-[#e5f4f1]"><Fit c="-mt-[2px] w-[18px] text-[16px] leading-[20px]">RK</Fit></div>
          <div className="ml-[13px] flex h-[48px] w-[76px] items-center rounded-[16px] bg-[#c9dcec] pl-[12px] text-[19px] leading-none text-[#333]">y</div>
        </div>
      </div>
      <div className="flex h-[31px] shrink-0 items-center border-b border-[#d9d6dd] bg-[#e4e1e9] text-[#7a7880]"><PersonShield c="ml-[89px] h-[18px] w-[18px]" /><Fit c="ml-[5px] w-[293px] text-[16.500px] leading-[22px]">Who can see your messages? Recording On</Fit></div>
      <div className="flex h-[60px] shrink-0 items-center text-[16px] leading-[22px] text-[#56565e]">
        <Fit c="ml-[21px] w-[19px]">To:</Fit>
        <div className="ml-[12px] mt-px flex h-[30px] w-[90px] items-center rounded-[7px] bg-[#1271e8] text-white"><Fit c="ml-[9px] w-[55px]">Ashok IT</Fit><svg viewBox="0 0 10 6" className="ml-[6px] mt-[4px] h-[6px] w-[10px]"><path d="M1 1l4 4 4-4" fill="none" stroke="#fff" strokeWidth="1.800" /></svg></div>
        <Fit c="ml-[9px] w-[111px] text-[#cf3a3a]">(Direct Message)</Fit>
        <svg viewBox="0 0 16 20" className="ml-[160px] h-[18px] w-[16px]" fill="none" stroke="#77777f" strokeWidth="1.300"><path d="M1 3q0-2 2-2h7l5 5v11q0 2-2 2H3q-2 0-2-2zM10 1v5h5" /></svg>
        <Smile c="ml-[12px] h-[19px] w-[19px]" />
      </div>
      <Fit c="-mt-[6px] ml-[21px] w-[156px] text-[17px] leading-[24px] text-[#7b7b83]">Type message here...</Fit>
      <div className="absolute left-[96px] top-[94px] h-[62px] w-[360px] border border-[#c4c4c4] bg-[#e0dfdf] shadow-[0_2px_12px_rgba(0,0,0,0.250)]" />
      <Recorder />
      <Sticky />
    </div>
  );
}

function Controls() {
  return (
    <>
      <div className="absolute left-0 top-[870px] h-[9px] w-full border border-dotted border-white">
        <div className="ml-[7px] mt-[2px] flex h-[4px] w-[1903px] rounded-full border border-[#555]"><div className="-my-px ml-px h-[4px] w-[1074px] bg-linear-to-b from-[#7cc0ff] via-[#0b5be0] to-[#4a9cf5]" /></div>
      </div>
      <Fit c="absolute left-[552px] top-[923px] w-[68px] text-[19px] leading-[28px] text-white">01:04:05</Fit>
      <div className="absolute left-[671px] top-[912px] flex h-[46px] w-[577px] items-center rounded-full border border-[#6c6c80] bg-linear-to-b from-white/15 via-white/25 to-white/10">
        <svg viewBox="0 0 22 22" className="ml-[42px] h-[21px] w-[21px]" fill="none" stroke="#fff" strokeWidth="2.600"><path d="M4.500 5c0 7 3 9 6.500 10 3 1 4 3 7 4M17.500 5c0 7-3 9-6.500 10-3 1-4 3-7 4" /><path d="M0 6.500L4.500 0 9 6.500zM13 6.500L17.500 0 22 6.500z" fill="#fff" stroke="none" /></svg>
        <svg viewBox="0 0 22 22" className="ml-[25px] h-[21px] w-[21px]" fill="none" stroke="#fff" strokeWidth="3"><path d="M15 3.500a8.500 8.500 0 1 1-9 1" /><path d="M2 1h8v8z" fill="#fff" stroke="none" /></svg>
        <div className="ml-[20px] h-[32px] w-px bg-[#777]/60" />
        <div className="ml-[21px] h-[18px] w-[18px] rounded-[1px] bg-[#f2f2f2]" />
        <div className="ml-[22px] flex h-[32px] w-[66px] shrink-0 items-center justify-center rounded-l-[14px] border border-white/35"><svg viewBox="0 0 30 18" className="ml-[2px] h-[18px] w-[29px]" fill="#f4f4f4"><path d="M14 0v18L0 9zM29 0v18L15 9z" /></svg></div>
        <div className="-ml-[3px] -mt-px flex h-[68px] w-[68px] shrink-0 items-center justify-center rounded-full border-2 border-[#70707c]/60">
          <div className="relative flex h-[58px] w-[58px] items-center justify-center gap-[5px] overflow-hidden rounded-full border-2 border-[#b9cdf5] bg-linear-to-b from-[#9bb2e6] from-0% via-[#0a3a9c] via-50% to-[#17b4f4]">
            <div className="absolute left-0 top-0 h-[25px] w-full rounded-b-[50%] bg-linear-to-b from-[#a9bce8] to-[#4a70c8]" />
            <div className="z-10 h-[28px] w-[8px] rounded-[2px] bg-[#f6f6f6]" /><div className="z-10 h-[28px] w-[8px] rounded-[2px] bg-[#f6f6f6]" />
          </div>
        </div>
        <div className="-ml-[3px] flex h-[32px] w-[66px] shrink-0 items-center justify-center rounded-r-[14px] border border-white/35"><svg viewBox="0 0 30 18" className="mr-[6px] h-[18px] w-[29px]" fill="#f4f4f4"><path d="M1 0v18l14-9zM16 0v18l14-9z" /></svg></div>
        <svg viewBox="0 0 24 22" className="ml-[17px] h-[21px] w-[23px] shrink-0"><path d="M0 7h4l7-6v20l-7-6H0z" fill="#f4f4f4" /><path d="M14 6c2 3 2 7 0 10M18 3c4 5 4 11 0 16" fill="none" stroke="#eee" strokeWidth="2" /></svg>
        <div className="relative ml-[26px] flex h-[4px] w-[99px] shrink-0 rounded-full border border-[#55555f] bg-[#8b8b93]/50"><div className="-my-px h-[3px] w-[50px] bg-[#2a70e0]" /><div className="absolute left-[41px] top-[-8px] h-[18px] w-[18px] rounded-full border border-[#1c55b8] bg-linear-to-b from-[#a8d0ff] via-[#1050c0] to-[#39a6ff]" /></div>
      </div>
      <svg viewBox="0 0 24 22" className="absolute left-[1867px] top-[910px] h-[22px] w-[24px]"><path d="M1 1h22v20H1z" fill="#000" stroke="#fff" strokeWidth="1.500" /><path d="M1 1h22v3.500H1z" fill="#fff" /><path d="M8 18l6-6-3-3 8-2v8l-3-2-5 6z" fill="#fff" /></svg>
      <svg viewBox="0 0 18 16" className="absolute left-[1892px] top-[11px] h-[15px] w-[18px]" fill="#fff"><path d="M0 0h5v5H0zM8 0h5v5H8zM0 8h5v5H0zM8 11.500l4-3.500v2.500h6v2h-6V15z" /></svg>
      <Fit c="absolute left-[10px] top-[3px] w-[252px] text-[18.500px] leading-[28px] text-white">81 AshokIT-JRTP21_11_11_2022</Fit>
    </>
  );
}

const App11 = ({ children, on, w = "w-[66px]" }: { children: ReactNode; on?: boolean; w?: string }) => (
  <div className={"flex shrink-0 flex-col items-center " + w}><div className="mt-[19px] flex h-[37px] items-center justify-center">{children}</div><div className={"mt-[5px] h-[5px] w-[9px] rounded-full " + (on ? "bg-[#7b828e]" : "")} /></div>
);

function Taskbar() {
  return (
    <div className="flex h-[72px] bg-linear-to-r from-[#e2eef6] via-[#d4e0f9] via-35% to-[#e2edf8] text-[#1b1b1b]">
      <div className="flex w-[452px] shrink-0" />
      <App11><Win11 c="h-[35px] w-[35px]" /></App11>
      <div className="ml-[8px] mt-[15px] flex h-[44px] w-[146px] shrink-0 items-center rounded-full bg-[#f2f5fc] shadow-sm"><Magnifier c="ml-[32px] h-[20px] w-[20px]" /><Fit c="ml-[9px] w-[53px] text-[18px] leading-[26px]">Search</Fit></div>
      <div className="ml-[6px] flex">
        <App11><TaskView c="h-[36px] w-[36px]" /></App11>
        <App11 w="w-[65px]"><svg viewBox="0 0 34 36" className="h-[36px] w-[34px]"><defs><linearGradient id="ch" x1="0" y1="0" x2="0.500" y2="1"><stop offset="0" stopColor="#9a6bb0" /><stop offset="1" stopColor="#5058c8" /></linearGradient></defs><path d="M17 0a17 17.500 0 1 1-7 33.500L0 35l2-8A17 17.500 0 0 1 17 0z" fill="url(#ch)" /><rect x="8" y="10" width="13" height="14" rx="2" fill="#fff" /><path d="M23 15l4-3v10l-4-3z" fill="#fff" /></svg></App11>
        <App11 on w="w-[67px]"><Folder c="h-[36px] w-[36px]" /></App11>
        <App11 on><Edge c="h-[36px] w-[36px]" /></App11>
        <App11><Store c="h-[36px] w-[34px]" /></App11>
        <App11><svg viewBox="0 0 28 32" className="h-[31px] w-[29px]"><path d="M6 1h13v22H6z" fill="#f6d46e" /><path d="M0 1l7 5v26l-7-6z" fill="#fce3a0" /><path d="M10 20c2-9 12-7 13-2z" fill="#0f5fb0" /><path d="M10 28c-6-1-4-9 2-8l10-1c8 0 7 9 1 9z" fill="#1e93e6" /></svg></App11>
        <App11><svg viewBox="0 0 36 36" className="h-[37px] w-[36px]"><rect width="27" height="27" rx="2" fill="#f5f5f5" /><path d="M3 3h4v4H3zM9 3h4v4H9zM15 3h4v4h-4zM3 9h4v4H3zM3 15h4v4H3z" fill="#d83b01" /><path d="M16 8h5.500v22M6 21h24" fill="none" stroke="#8e959c" strokeWidth="3.500" /><circle cx="32" cy="19" r="3.200" fill="none" stroke="#1d9bdc" strokeWidth="2.500" /><circle cx="19" cy="32" r="3.200" fill="none" stroke="#1d9bdc" strokeWidth="2.500" /></svg></App11>
        <App11><svg viewBox="0 0 36 34" className="h-[34px] w-[36px]"><circle cx="16" cy="17" r="16" fill="#f7941e" /><circle cx="20" cy="17" r="16" fill="#2c2255" /><path d="M5 13h30M4 17h32M5 21h30" stroke="#f5f3fa" strokeWidth="2" /></svg></App11>
        <App11 on><Chrome c="h-[36px] w-[36px]" /></App11>
        <App11 on w="w-[67px]"><svg viewBox="0 0 44 38" className="h-[38px] w-[44px] translate-x-px -translate-y-px"><circle cx="19" cy="9" r="5.500" fill="#7b83eb" /><circle cx="31" cy="12" r="4" fill="#5059c9" /><path d="M24 16h12v10q0 6-6 6z" fill="#5059c9" /><path d="M11 16h17v14q-1 7-8 7t-9-7z" fill="#7b83eb" /><rect x="1" y="10" width="17" height="18" rx="1" fill="#4b53bc" /><path d="M5.500 15h8M9.500 15v9" stroke="#fff" strokeWidth="2.200" /><circle cx="35" cy="8" r="7.500" fill="#6bb700" stroke="#eef" strokeWidth="1.500" /><path d="M31.500 8l2.500 2.500 4.500-5" stroke="#fff" strokeWidth="1.800" fill="none" /></svg></App11>
        <App11 on w="w-[65px]"><svg viewBox="0 0 44 44" className="h-[44px] w-[44px] translate-x-[3px] -translate-y-[5px]"><path d="M10 10h18v18H10z" fill="#0a5fb0" /><path d="M9 24h27v19H9z" fill="#1a8fe3" /><path d="M9 43l27-17v17z" fill="#3ab3f2" /><rect x="1" y="17" width="18" height="18" rx="1" fill="#0f6cbd" /><circle cx="10" cy="26" r="4.500" fill="none" stroke="#fff" strokeWidth="2.500" /><circle cx="32" cy="13" r="12" fill="#0560b6" /><rect x="24.500" y="7.500" width="15" height="11" rx="1.500" fill="none" stroke="#fff" strokeWidth="1.500" /><path d="M25 9l7 5 7-5" stroke="#fff" strokeWidth="1.500" fill="none" /></svg></App11>
      </div>
      <div className="ml-[5px] mt-[9px] flex h-[57px] w-[56px] shrink-0 flex-col items-center rounded-[5px] bg-[#eef2fa] pt-[15px] shadow-sm"><svg viewBox="0 0 30 31" className="h-[31px] w-[30px] -translate-x-px"><path d="M6 1l22 0v27l-4 2H6z" fill="#8fc5de" stroke="#4c9cc0" /><path d="M1 1h22v28H1z" fill="#b4dcec" stroke="#5ea9c9" /><circle cx="12" cy="15" r="10" fill="#f5821f" /><path d="M8.500 8.500v13l9-6.500z" fill="#fff" /></svg><div className="mt-[6px] h-[5px] w-[24px] rounded-full bg-[#0078d7]" /></div>
      <div className="ml-auto mr-[30px] flex items-center">
        <Chevron c="-mt-[2px] h-[10px] w-[18px]" />
        <Cloud c="ml-[15px] h-[16px] w-[24px]" />
        <Wifi c="-mt-[2px] ml-[18px] h-[18px] w-[24px]" />
        <Speaker c="ml-[12px] -mt-[2px] h-[20px] w-[24px]" />
        <Battery c="ml-[12px] -mt-px h-[16px] w-[24px]" />
        <div className="-mt-px ml-[26px] flex w-[73px] flex-col items-end text-[17px] leading-[23px]"><Fit c="w-[61px]">2:16 PM</Fit><Fit c="w-[73px]">6/2/2023</Fit></div>
        <div className="ml-[11px] flex h-[24px] w-[24px] items-center justify-center rounded-full bg-[#0078d7] text-[14px] leading-none text-white">5</div>
      </div>
    </div>
  );
}

export default function App() {
  return (
    <div className="flex h-[1080px] w-[1920px] flex-col overflow-hidden bg-black font-['Open_Sans','Noto_Sans',sans-serif]">
      <div className="flex h-[34px] shrink-0 items-center bg-white text-[#8a8a8a]">
        <Wmp c="ml-[2px] h-[24px] w-[24px]" />
        <div className="ml-[1710px] h-px w-[15px] bg-[#8a8a8a]" />
        <Restore c="ml-[54px] h-[16px] w-[16px]" />
        <Cross c="ml-[55px] h-[16px] w-[16px]" />
      </div>
      <div className="relative h-[974px] shrink-0 overflow-hidden bg-black pl-[92px]">
        <div className="flex w-[1734px] flex-col">
          <div className="flex h-[21px] bg-[#c2c2c2]">
            <div className="ml-[650px] h-[20px] w-[280px] rounded-b-[4px] bg-[#12a04a] pl-[22px]"><Fit c="w-[238px] text-[16px] leading-[14px] text-[#08401e]">You are viewing Ashok IT's screen</Fit></div>
            <div className="h-[20px] w-[155px] rounded-br-[4px] bg-[#181818] pl-[38px]"><Fit c="w-[86px] text-[16px] leading-[14px] text-[#666]">View Options</Fit></div>
          </div>
          <div className="flex h-[902px]">
            <div className="flex w-[1250px] flex-col">
              <div className="flex h-[126px] items-start bg-[#242424] pt-[3px]">
                <Tile box="ml-[208px] w-[205px]" name="Rakesh K" w="w-[81px]" label="Rakesh K" lw="w-[67px]" muted center={null} />
                <div className="ml-[2px] flex shrink-0 border border-[#7f9430]"><Tile box="h-[116px] w-[205px]" name="" w="" label="Ashok IT" lw="w-[62px]" center={<div className="-mb-[24px]"><Logo /></div>} /></div>
                <Tile box="ml-[3px] w-[205px]" name="Sai" w="w-[26px]" label="Sai" lw="w-[22px]" muted center={null} />
                <Tile box="ml-[3px] w-[205px]" name="Bikash" w="w-[58px]" label="Bikash" lw="w-[46px]" center={null} />
                <div className="ml-[17px] mt-[38px] flex h-[41px] w-[41px] shrink-0 items-center justify-center rounded-full border-2 border-[#e8eefc] bg-[#1668e3]"><svg viewBox="0 0 10 18" className="h-[17px] w-[10px]"><path d="M1 1l8 8-8 8" fill="none" stroke="#fff" strokeWidth="2" /></svg></div>
                <div className="ml-[72px] mt-[7px] flex h-[33px] w-[74px] items-center rounded-[6px] bg-[#2a2a2a] text-[#d8d8d8]"><svg viewBox="0 0 15 14" className="ml-[8px] h-[14px] w-[15px]" fill="currentColor"><path d="M0 0h4v3H0zM5.500 0h4v3h-4zM11 0h4v3h-4zM0 5h15v9H0z" /></svg><Fit c="-mt-px ml-[7px] w-[32px] text-[16px] leading-[22px]">View</Fit></div>
              </div>
              <Notepad />
              <ZoomBar />
            </div>
            <ChatPanel />
          </div>
          <HostTaskbar />
        </div>
        <div className="absolute inset-x-0 top-0 h-[56px] bg-linear-to-b from-black via-black/60 via-40% to-transparent" />
        <div className="absolute inset-x-0 bottom-0 h-[104px] bg-linear-to-b from-transparent to-black" />
        <Controls />
      </div>
      <Taskbar />
    </div>
  );
}
